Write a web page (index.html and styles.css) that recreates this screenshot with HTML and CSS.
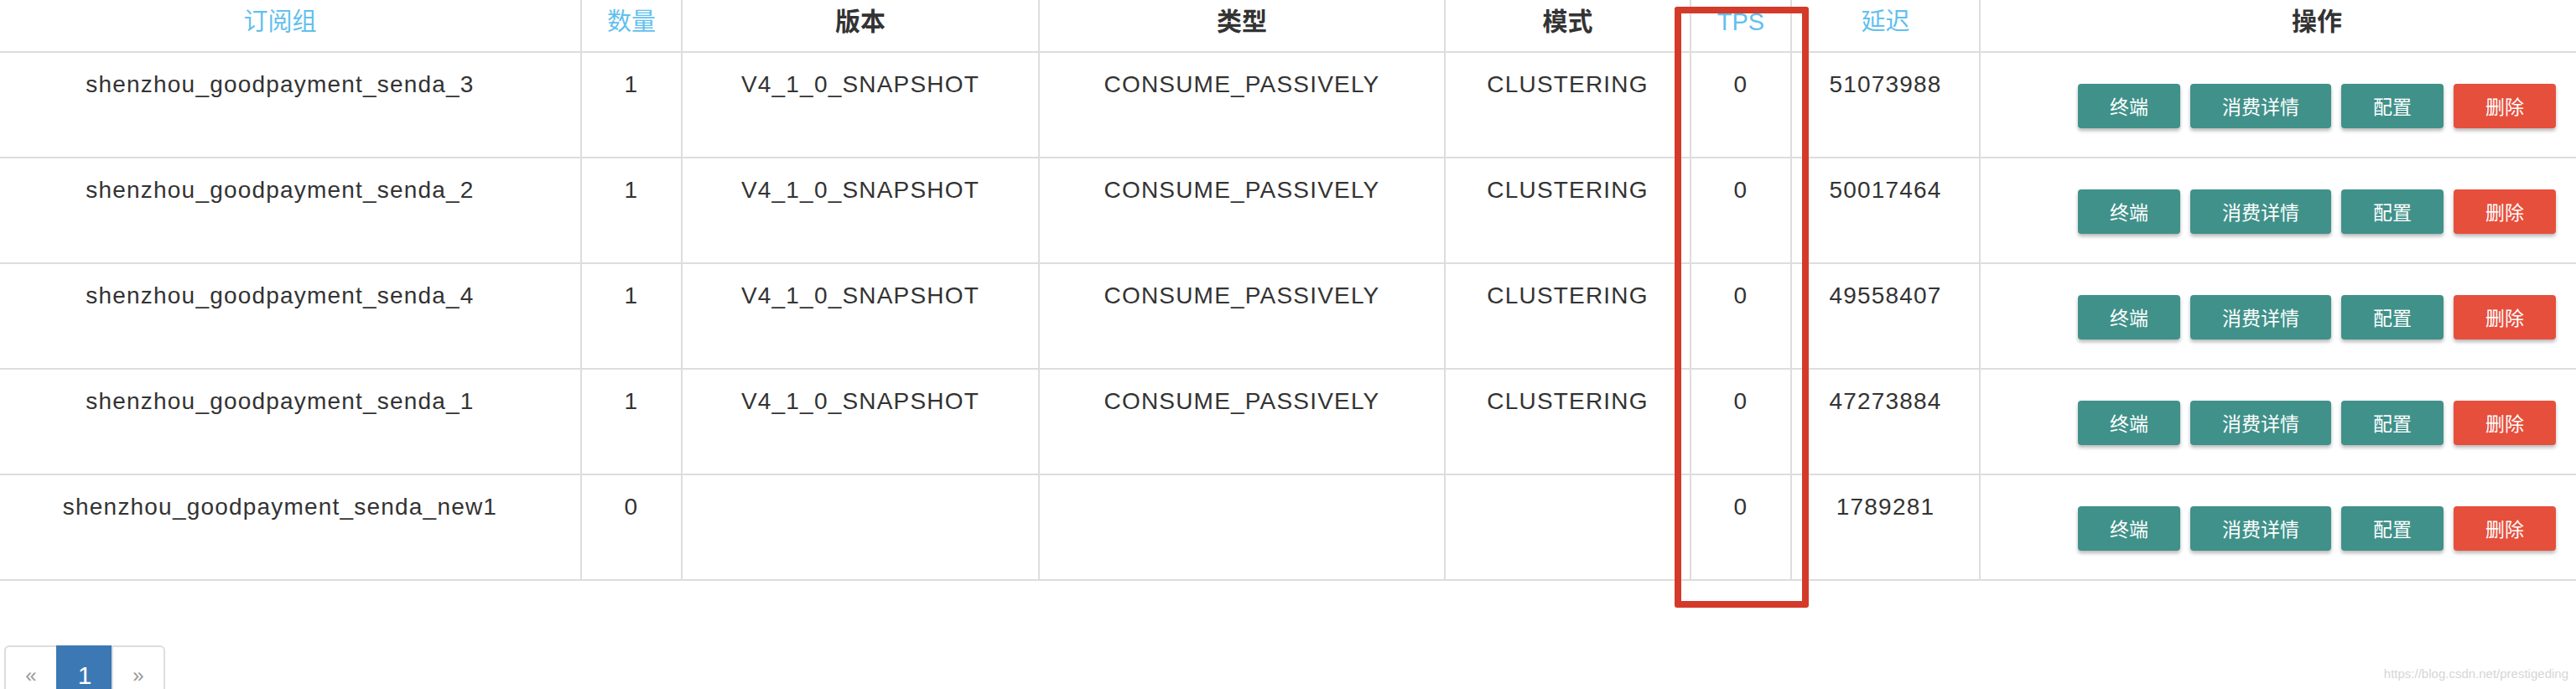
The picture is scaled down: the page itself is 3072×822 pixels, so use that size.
FILE: index.html
```html
<!DOCTYPE html>
<html lang="zh-CN">
<head>
  <meta charset="UTF-8">
  <title>消费组列表</title>
  <link rel="stylesheet" href="styles.css">
</head>
<body>
  <div class="table-wrap">
    <table class="group-table">
      <colgroup>
        <col class="c-group">
        <col class="c-count">
        <col class="c-version">
        <col class="c-type">
        <col class="c-mode">
        <col class="c-tps">
        <col class="c-delay">
        <col class="c-ops">
      </colgroup>
      <thead>
        <tr>
          <th class="sort">订阅组</th>
          <th class="sort">数量</th>
          <th>版本</th>
          <th>类型</th>
          <th>模式</th>
          <th class="sort">TPS</th>
          <th class="sort">延迟</th>
          <th>操作</th>
        </tr>
      </thead>
      <tbody>
        <tr>
          <td>shenzhou_goodpayment_senda_3</td>
          <td>1</td>
          <td>V4_1_0_SNAPSHOT</td>
          <td>CONSUME_PASSIVELY</td>
          <td>CLUSTERING</td>
          <td>0</td>
          <td>51073988</td>
          <td class="ops">
            <div class="btn-group">
              <button class="btn btn-teal">终端</button>
              <button class="btn btn-teal">消费详情</button>
              <button class="btn btn-teal">配置</button>
              <button class="btn btn-red">删除</button>
            </div>
          </td>
        </tr>
        <tr>
          <td>shenzhou_goodpayment_senda_2</td>
          <td>1</td>
          <td>V4_1_0_SNAPSHOT</td>
          <td>CONSUME_PASSIVELY</td>
          <td>CLUSTERING</td>
          <td>0</td>
          <td>50017464</td>
          <td class="ops">
            <div class="btn-group">
              <button class="btn btn-teal">终端</button>
              <button class="btn btn-teal">消费详情</button>
              <button class="btn btn-teal">配置</button>
              <button class="btn btn-red">删除</button>
            </div>
          </td>
        </tr>
        <tr>
          <td>shenzhou_goodpayment_senda_4</td>
          <td>1</td>
          <td>V4_1_0_SNAPSHOT</td>
          <td>CONSUME_PASSIVELY</td>
          <td>CLUSTERING</td>
          <td>0</td>
          <td>49558407</td>
          <td class="ops">
            <div class="btn-group">
              <button class="btn btn-teal">终端</button>
              <button class="btn btn-teal">消费详情</button>
              <button class="btn btn-teal">配置</button>
              <button class="btn btn-red">删除</button>
            </div>
          </td>
        </tr>
        <tr>
          <td>shenzhou_goodpayment_senda_1</td>
          <td>1</td>
          <td>V4_1_0_SNAPSHOT</td>
          <td>CONSUME_PASSIVELY</td>
          <td>CLUSTERING</td>
          <td>0</td>
          <td>47273884</td>
          <td class="ops">
            <div class="btn-group">
              <button class="btn btn-teal">终端</button>
              <button class="btn btn-teal">消费详情</button>
              <button class="btn btn-teal">配置</button>
              <button class="btn btn-red">删除</button>
            </div>
          </td>
        </tr>
        <tr>
          <td>shenzhou_goodpayment_senda_new1</td>
          <td>0</td>
          <td></td>
          <td></td>
          <td></td>
          <td>0</td>
          <td>1789281</td>
          <td class="ops">
            <div class="btn-group">
              <button class="btn btn-teal">终端</button>
              <button class="btn btn-teal">消费详情</button>
              <button class="btn btn-teal">配置</button>
              <button class="btn btn-red">删除</button>
            </div>
          </td>
        </tr>
      </tbody>
    </table>
  </div>

  <!-- 分页 -->
  <ul class="pager">
    <li class="disabled">&laquo;</li>
    <li class="active">1</li>
    <li class="disabled">&raquo;</li>
  </ul>

  <!-- 标注框 -->
  <div class="mark-box"></div>

  <div class="watermark">https://blog.csdn.net/prestigeding</div>
</body>
</html>
```

FILE: styles.css
```css
html, body {
  margin: 0;
  padding: 0;
  background-color: #fff;
  overflow: hidden;
}
body {
  width: 3072px;
  height: 822px;
  font-family: "Liberation Sans", "Noto Sans CJK SC", sans-serif;
  color: #333;
}
.table-wrap {
  margin-left: -26px;
}
.group-table {
  width: 3190px;
  table-layout: fixed;
  border-collapse: collapse;
}
.c-group { width: 718px; }
.c-count { width: 120px; }
.c-version { width: 426px; }
.c-type { width: 484px; }
.c-mode { width: 293px; }
.c-tps { width: 120px; }
.c-delay { width: 225px; }
.c-ops { width: 804px; }

.group-table th,
.group-table td {
  border-left: 2px solid #ddd;
  border-right: 2px solid #ddd;
  text-align: center;
  vertical-align: top;
  padding: 0;
}
.group-table th {
  height: 62px;
  box-sizing: border-box;
  padding-top: 6px;
  font-size: 30px;
  line-height: 40px;
  font-weight: bold;
  border-bottom: 2px solid #ddd;
}
.group-table th.sort {
  font-weight: normal;
  color: #62bfee;
  font-size: 29px;
}
.group-table tbody tr {
  height: 126px;
}
.group-table td {
  padding-top: 18px;
  font-size: 28px;
  line-height: 40px;
  letter-spacing: 1.2px;
  border-bottom: 2px solid #ddd;
}
.group-table td.ops {
  vertical-align: middle;
  padding-top: 0;
  letter-spacing: 0;
}
.btn-group {
  display: flex;
  justify-content: center;
  gap: 12px;
  padding-top: 2px;
}
.btn {
  height: 53px;
  padding: 0 38px;
  border: none;
  border-radius: 4px;
  font-family: "Noto Sans CJK SC", sans-serif;
  font-size: 23px;
  line-height: 53px;
  color: #fff;
  box-shadow: 0 3px 4px rgba(0, 0, 0, 0.28);
  cursor: pointer;
}
.btn-teal {
  background-color: #40918a;
}
.btn-red {
  background-color: #e64f3c;
}

.pager {
  display: flex;
  list-style: none;
  margin: 77px 0 0 5px;
  padding: 0;
}
.pager li {
  box-sizing: border-box;
  width: 64px;
  height: 76px;
  padding-top: 14px;
  font-size: 30px;
  line-height: 40px;
  text-align: center;
  border: 2px solid #ddd;
  margin-left: -2px;
}
.pager li:first-child {
  margin-left: 0;
  border-radius: 6px 0 0 6px;
}
.pager li:last-child {
  border-radius: 0 6px 0 0;
}
.pager li.disabled {
  color: #999;
  font-size: 24px;
}
.pager li.active {
  width: 68px;
  background-color: #3c78b4;
  border-color: #3c78b4;
  color: #fff;
}

.mark-box {
  position: absolute;
  left: 1997px;
  top: 8px;
  width: 160px;
  height: 717px;
  box-sizing: border-box;
  border: 8px solid #d43a2a;
  border-radius: 3px;
}
.watermark {
  position: absolute;
  right: 9px;
  top: 795px;
  font-size: 15px;
  color: #d6d6d6;
}
```
